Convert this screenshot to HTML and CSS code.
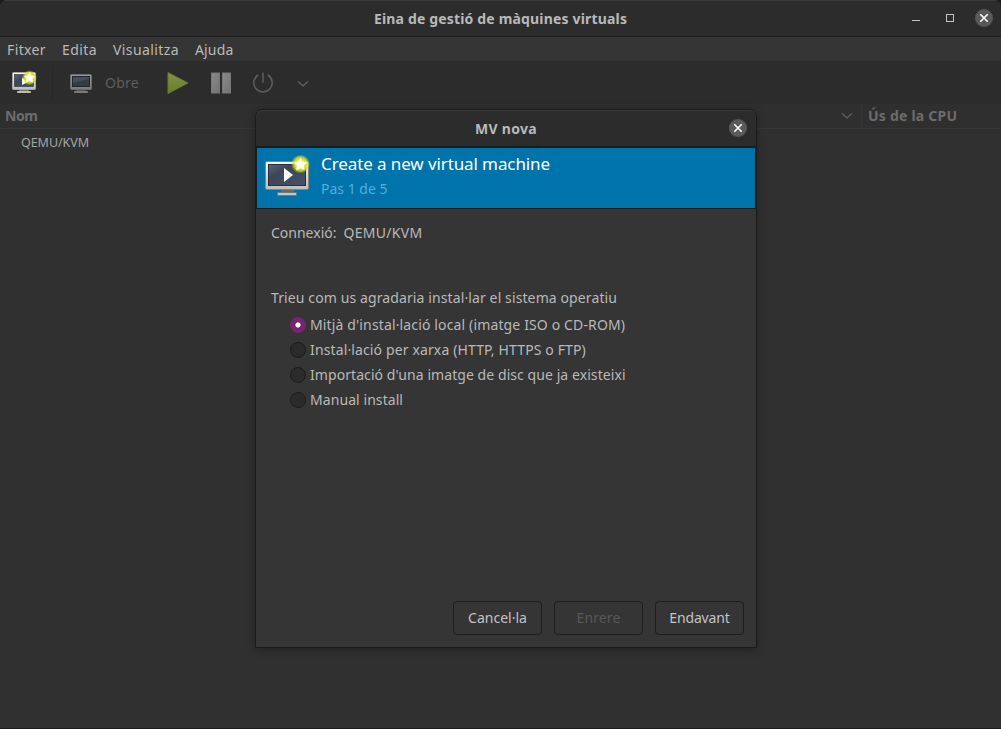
FILE: index.html
```html
<!DOCTYPE html>
<html>
<head>
<meta charset="utf-8">
<title>Eina de gestió de màquines virtuals</title>
<link rel="stylesheet" href="styles.css">
</head>
<body>
<svg class="defs" width="0" height="0" aria-hidden="true">
  <defs>
    <linearGradient id="frame" x1="0" y1="0" x2="0" y2="1"><stop offset="0" stop-color="#f5f5f3"/><stop offset="1" stop-color="#bdbdba"/></linearGradient>
    <linearGradient id="screen" x1="0" y1="0" x2="1" y2="1"><stop offset="0" stop-color="#5b6472"/><stop offset=".35" stop-color="#3c4658"/><stop offset="1" stop-color="#46526a"/></linearGradient>
    <linearGradient id="play" x1="0" y1="0" x2="0" y2="1"><stop offset="0" stop-color="#87924d"/><stop offset="1" stop-color="#667b2b"/></linearGradient>
    <linearGradient id="pause" x1="0" y1="0" x2="1" y2="1"><stop offset="0" stop-color="#8b8b8b"/><stop offset="1" stop-color="#737373"/></linearGradient>
    <radialGradient id="glow"><stop offset=".4" stop-color="#f2f218"/><stop offset=".7" stop-color="#e0e418" stop-opacity=".85"/><stop offset="1" stop-color="#d8e020" stop-opacity="0"/></radialGradient>
  </defs>
</svg>
<div class="window">
  <header class="titlebar">
    <h1 class="title">Eina de gestió de màquines virtuals</h1>
    <div class="controls">
      <svg width="10" height="18" viewBox="0 0 10 18"><path d="M1 11.500h8" stroke="#c3c3c3"/></svg>
      <svg width="10" height="18" viewBox="0 0 10 18"><rect x="1.500" y="5.500" width="7" height="7" fill="none" stroke="#c3c3c3"/></svg>
      <span class="close"><svg width="18" height="18" viewBox="0 0 18 18"><path d="M5.300 5.300l7.400 7.400M12.700 5.300l-7.400 7.400" stroke="#fff" stroke-width="1.600"/></svg></span>
    </div>
  </header>
  <nav class="menubar"><span class="m1">Fitxer</span><span class="m2">Edita</span><span class="m3">Visualitza</span><span class="m4">Ajuda</span></nav>
  <div class="toolbar">
    <div class="tool new-vm">
      <svg width="26" height="26" viewBox="0 0 26 26">
        <path d="M9 20h8l1 2H8z" fill="#777"/><rect x="6" y="22" width="14" height="2" rx=".7" fill="#bcbcb8"/>
        <rect x="1.500" y="3.500" width="23" height="17" rx="1" fill="url(#frame)" stroke="#a5a5a2"/>
        <rect x="3.500" y="5.500" width="19" height="12" fill="url(#screen)" stroke="#35394a" stroke-width=".7"/>
        <path d="M11 8.500l6 4.500-6 3z" fill="#fff"/>
        <circle cx="18.500" cy="8.700" r="7.500" fill="url(#glow)"/>
        <path d="M18.500 3l1.700 3.600 4 .5-2.900 2.700.8 4-3.600-2-3.600 2 .8-4-2.900-2.700 4-.5z" fill="#fff"/>
      </svg>
    </div>
    <div class="tool open">
      <svg width="24" height="24" viewBox="0 0 24 24">
        <g opacity=".54"><path d="M8 18h8l1 2H7z" fill="#777"/><rect x="5" y="20" width="14" height="2" rx=".7" fill="#bcbcb8"/>
        <rect x="1.500" y="3.500" width="21" height="15" rx="1" fill="url(#frame)" stroke="#a5a5a2"/></g>
        <rect x="3.500" y="5.500" width="17" height="10" fill="#333b47" stroke="#22262c"/>
        <path d="M4 6h16v2L4 12z" fill="#474e57"/>
      </svg>
      <span class="open-label">Obre</span>
    </div>
    <svg class="play" width="22" height="24" viewBox="0 0 22 24"><path d="M1 1.500v21l20-10.500z" fill="url(#play)" stroke="#677c30"/></svg>
    <svg class="pause" width="20" height="22" viewBox="0 0 20 22"><g fill="url(#pause)" stroke="#777"><rect x=".5" y="1" width="8" height="20"/><rect x="11.500" y="1" width="8" height="20"/></g></svg>
    <svg class="power" width="22" height="22" viewBox="0 0 22 22"><path d="M6.200 3A9.200 9.200 0 1 0 15.800 3M11 .8v10" fill="none" stroke="#5e5e5e" stroke-width="1.500"/></svg>
    <svg class="drop" width="12" height="8" viewBox="0 0 12 8"><path d="M1 1.500l5 4.500 5-4.500" fill="none" stroke="#646464" stroke-width="1.200"/></svg>
  </div>
  <div class="columns">
    <div class="col-name"><span class="h-nom">Nom</span><svg width="12" height="8" viewBox="0 0 12 8"><path d="M1 1.500l5 4.500 5-4.500" fill="none" stroke="#626262" stroke-width="1.200"/></svg></div>
    <div class="col-cpu">Ús de la CPU</div>
  </div>
  <div class="list"><div class="row">QEMU/KVM</div></div>
</div>

<section class="dialog">
  <header class="dialog-title"><h2>MV nova</h2><span class="close"><svg width="18" height="18" viewBox="0 0 18 18"><path d="M5.300 5.300l7.400 7.400M12.700 5.300l-7.400 7.400" stroke="#fff" stroke-width="1.600"/></svg></span></header>
  <div class="banner">
    <svg width="48" height="44" viewBox="0 0 48 44">
      <path d="M17 35h13v4H17z" fill="#66696c"/><rect x="13.500" y="37.500" width="19" height="3" rx=".6" fill="#c6c6c3" stroke="#777"/>
      <rect x="1.500" y="6.500" width="43" height="28" rx="1.500" fill="url(#frame)" stroke="#85857f"/>
      <rect x="4.500" y="9.500" width="37" height="21" fill="url(#screen)" stroke="#2a2f3c"/>
      <path d="M20 13v14l9-7z" fill="#fff"/>
      <circle cx="36.500" cy="9" r="9.500" fill="url(#glow)"/>
      <path d="M36.500 3l2 3.900 4.300.6-3.100 3 .7 4.300-3.900-2-3.900 2 .7-4.300-3.100-3 4.300-.6z" fill="#fff" stroke="#fff" stroke-width=".5"/>
    </svg>
    <div class="banner-text"><div class="heading">Create a new virtual machine</div><div class="step">Pas 1 de 5</div></div>
  </div>
  <div class="content">
    <div class="connection"><span>Connexió:</span><span class="conn-value">QEMU/KVM</span></div>
    <div class="question">Trieu com us agradaria instal·lar el sistema operatiu</div>
    <div class="options">
      <label class="option o1"><i class="radio checked"></i>Mitjà d'instal·lació local (imatge ISO o CD-ROM)</label>
      <label class="option o2"><i class="radio"></i>Instal·lació per xarxa (HTTP, HTTPS o FTP)</label>
      <label class="option o3"><i class="radio"></i>Importació d'una imatge de disc que ja existeixi</label>
      <label class="option o4"><i class="radio"></i>Manual install</label>
    </div>
  </div>
  <footer class="actions"><button>Cancel·la</button><button class="off">Enrere</button><button class="next">Endavant</button></footer>
</section>
</body>
</html>
```
FILE: styles.css
```css
* { box-sizing: border-box; }
html { background: #1b1b1b; }
body {
  margin: 0; width: 1001px; height: 729px; overflow: hidden;
  font: 14px/20px "Noto Sans", "Open Sans", sans-serif; color: #b9b9b9;
}
svg { display: block; flex: none; }
.defs { position: absolute; }
h1, h2 { margin: 0; font-size: 14px; line-height: 20px; font-weight: 700; }

.window {
  height: 728px; display: flex; flex-direction: column; background: #303030;
  border-radius: 7px 7px 0 0; overflow: hidden;
}
.titlebar {
  height: 37px; flex: none; display: grid; grid-template-columns: 1fr auto 1fr; align-items: center;
  background: #2c2c2c; border-top: 1px solid #3c3c3c; border-bottom: 1px solid #1c1c1c;
}
.title { grid-column: 2; letter-spacing: .17px; }
.controls { display: flex; align-items: center; justify-content: flex-end; gap: 24px; padding: 0 8px 1px 0; }
.controls .close { margin-left: -4px; }
.close { width: 18px; height: 18px; border-radius: 50%; background: #595959; }

.menubar { height: 24px; flex: none; display: flex; gap: 16px; padding: 3px 0 0 7px; background: #353535; }
.menubar span { line-height: 20px; }
.m1 { width: 39px; letter-spacing: .38px; }
.m2 { width: 35px; letter-spacing: .42px; }
.m3 { width: 66px; letter-spacing: .41px; }
.m4 { letter-spacing: .15px; }

.toolbar { height: 43px; flex: none; display: flex; align-items: center; background: #2c2c2c; }
.new-vm { width: 53px; height: 34px; padding: 3px 0 0 11px; border-right: 1px solid #272727; }
.open { display: flex; align-items: center; gap: 12px; margin-left: 16px; width: 98px; }
.open-label { color: #5e5e5e; letter-spacing: .26px; }
.pause { margin-left: 22px; }
.power { margin-left: 21px; }
.drop { margin-left: 23px; margin-top: 2px; }

.columns {
  height: 25px; flex: none; display: flex; background: #2f2f2f; border-bottom: 1px solid #373737;
  color: #6c6c6c; font-weight: 700; line-height: 24px;
}
.col-name {
  width: 862px; display: flex; align-items: center; justify-content: space-between;
  padding: 0 8px 0 5px; border-right: 1px solid #363636;
}
.h-nom { letter-spacing: -.5px; }
.col-cpu { padding-left: 6px; letter-spacing: .22px; }
.row { padding: 4px 0 0 21px; font-size: 12.5px; line-height: 20px; letter-spacing: -.05px; color: #a5a5a5; }

.dialog {
  position: absolute; left: 255px; top: 109px; width: 502px; height: 539px;
  display: flex; flex-direction: column; background: #353535; border: 1px solid #1b1b1b;
  border-radius: 8px 8px 0 0; box-shadow: 0 2px 9px rgba(0, 0, 0, .3);
}
.dialog-title {
  height: 38px; flex: none; display: grid; grid-template-columns: 1fr auto 1fr; align-items: center;
  background: #2c2c2c; border-top: 1px solid #3c3c3c; border-bottom: 2px solid #1c1c1c; border-radius: 7px 7px 0 0;
}
.dialog-title h2 { grid-column: 2; letter-spacing: .3px; padding-top: 1px; }
.dialog-title .close { justify-self: end; margin: 0 9px 2px 0; }
.banner {
  height: 61px; flex: none; display: flex; padding-left: 7px; background: #0073aa;
  border: 0 solid #1c1c1c; border-width: 0 1px 1px;
}
.banner svg { margin-top: 7px; }
.banner-text { padding: 3px 0 0 9px; }
.heading { font-size: 17px; line-height: 26px; letter-spacing: -.1px; color: #fff; }
.step { line-height: 24px; color: #54ade0; }

.content { flex: 1; padding: 14px 15px 0; }
.connection { display: flex; gap: 7px; }
.conn-value { letter-spacing: .3px; }
.question { margin-top: 45px; letter-spacing: .11px; white-space: nowrap; }
.options { margin: 4px 0 0 19px; }
.option { height: 25px; display: flex; align-items: center; gap: 4px; white-space: nowrap; }
.o1 { letter-spacing: .14px; }
.o2 { letter-spacing: .13px; }
.o3 { letter-spacing: .07px; }
.o4 { letter-spacing: .07px; }
.radio { width: 16px; height: 16px; border-radius: 50%; background: #2b2b2b; border: 1px solid #1b1b1b; }
.radio.checked { background: radial-gradient(circle, #fff 2.2px, #762572 3px); border-color: #762572; }

.actions { display: flex; justify-content: flex-end; gap: 12px; padding: 0 12px 12px; }
button {
  width: 89px; height: 34px; padding: 0; border: 1px solid #1d1d1d; border-radius: 4px;
  background: #353535; color: #c3c3c3; font: inherit;
}
.off { color: #585858; letter-spacing: .12px; }
.next { letter-spacing: -.15px; }
```
